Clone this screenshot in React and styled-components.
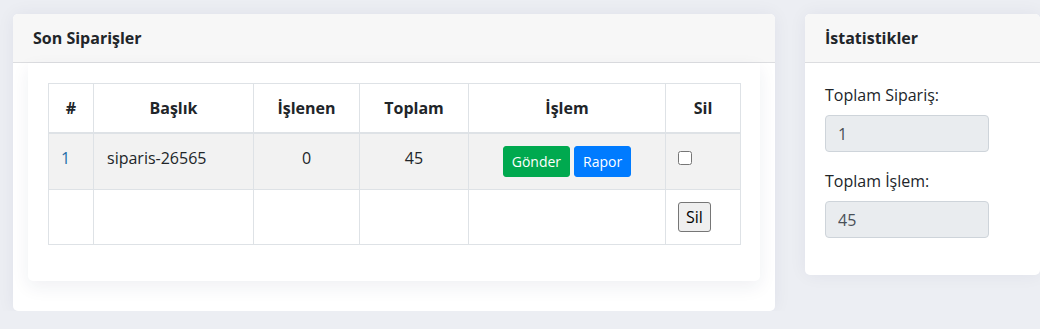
import React from 'react';
import styled, { createGlobalStyle } from 'styled-components';

const GlobalStyle = createGlobalStyle`
  html, body {
    margin: 0;
    padding: 0;
    background: #eceef3;
    overflow: hidden;
  }
  body {
    font-family: "Open Sans", "Noto Sans", sans-serif;
    font-size: 16px;
    color: #212529;
  }
`;

const Page = styled.div`
  display: flex;
  align-items: flex-start;
  gap: 30px;
  padding: 14px 0 0 13px;
  width: 1040px;
  box-sizing: border-box;
`;

const Card = styled.section`
  width: ${p => p.$width}px;
  flex-shrink: 0;
  background: #ffffff;
  border-radius: 5px;
  box-shadow: 0 0 18px rgba(30, 40, 80, 0.06);
  overflow: hidden;
`;

const CardHeader = styled.header`
  background: #f7f7f7;
  border-bottom: 1px solid #dcdde0;
  padding: 12px 20px;
  line-height: 24px;
  font-size: 16px;
  font-weight: 700;
  color: #212529;
`;

const InnerCard = styled.div`
  margin: 0 15px 30px;
  padding: 20px 20px 20px;
  background: #ffffff;
  border-radius: 0 0 5px 5px;
  box-shadow: 0 6px 18px rgba(30, 40, 80, 0.07);
`;

const Table = styled.table`
  width: 692px;
  border-collapse: collapse;
  table-layout: fixed;
  margin-bottom: 16px;
  line-height: 24px;
`;

const Th = styled.th`
  box-sizing: border-box;
  width: ${p => p.$w}px;
  padding: 12px;
  border: 1px solid #dee2e6;
  border-bottom: 2px solid #dee2e6;
  font-weight: 700;
  text-align: center;
  vertical-align: top;
`;

const Row = styled.tr`
  background: ${p => (p.$striped ? '#f2f2f2' : '#ffffff')};
`;

const Td = styled.td`
  padding: 12px;
  padding-left: ${p => p.$pl || 12}px;
  border: 1px solid #dee2e6;
  vertical-align: top;
  text-align: ${p => p.$align || 'left'};
  color: ${p => p.$color || '#212529'};
`;

const ActionButton = styled.button`
  font-family: inherit;
  font-size: 14px;
  line-height: 21px;
  padding: 4px 8px;
  border: 1px solid ${p => p.$bg};
  border-radius: 3px;
  background: ${p => p.$bg};
  color: #ffffff;
  cursor: pointer;
  & + & {
    margin-left: 4px;
  }
`;

const Check = styled.input`
  width: 14px;
  height: 14px;
  margin: 0;
  vertical-align: -1px;
`;

const PlainButton = styled.button`
  font-family: inherit;
  font-size: 16px;
  line-height: 24px;
  padding: 2px 7px;
  background: #efefef;
  border: 1px solid #767676;
  border-radius: 3px;
  color: #000000;
`;

const StatsBody = styled.div`
  padding: 20px;
`;

const Field = styled.div`
  margin-bottom: 17px;
`;

const Label = styled.label`
  display: block;
  line-height: 24px;
  margin-bottom: 8px;
  color: #212529;
`;

const ReadOnly = styled.input`
  display: block;
  box-sizing: border-box;
  width: 164px;
  height: 37px;
  padding: 6px 12px;
  font-family: inherit;
  font-size: 16px;
  line-height: 23px;
  color: #495057;
  background: #e9ecef;
  border: 1px solid #ced4da;
  border-radius: 4px;
  outline: none;
`;

const columns = [
  { label: '#', w: 45 },
  { label: 'Başlık', w: 160 },
  { label: 'İşlenen', w: 106 },
  { label: 'Toplam', w: 109 },
  { label: 'İşlem', w: 197 },
  { label: 'Sil', w: 75 },
];

export default function App() {
  return (
    <>
      <GlobalStyle />
      <Page>
        <Card $width={762}>
          <CardHeader>Son Siparişler</CardHeader>
          <InnerCard>
            <Table>
              <thead>
                <tr>
                  {columns.map(c => (
                    <Th key={c.label} $w={c.w}>{c.label}</Th>
                  ))}
                </tr>
              </thead>
              <tbody>
                <Row $striped>
                  <Td $color="#1f6fa8">1</Td>
                  <Td $pl={13}>siparis-26565</Td>
                  <Td $align="center">0</Td>
                  <Td $align="center">45</Td>
                  <Td $align="center">
                    <ActionButton $bg="#00a94f">Gönder</ActionButton>
                    <ActionButton $bg="#007bff">Rapor</ActionButton>
                  </Td>
                  <Td>
                    <Check type="checkbox" />
                  </Td>
                </Row>
                <Row>
                  <Td />
                  <Td />
                  <Td />
                  <Td />
                  <Td />
                  <Td>
                    <PlainButton>Sil</PlainButton>
                  </Td>
                </Row>
              </tbody>
            </Table>
          </InnerCard>
        </Card>
        <Card $width={235}>
          <CardHeader>İstatistikler</CardHeader>
          <StatsBody>
            <Field>
              <Label>Toplam Sipariş:</Label>
              <ReadOnly readOnly value="1" />
            </Field>
            <Field>
              <Label>Toplam İşlem:</Label>
              <ReadOnly readOnly value="45" />
            </Field>
          </StatsBody>
        </Card>
      </Page>
    </>
  );
}
